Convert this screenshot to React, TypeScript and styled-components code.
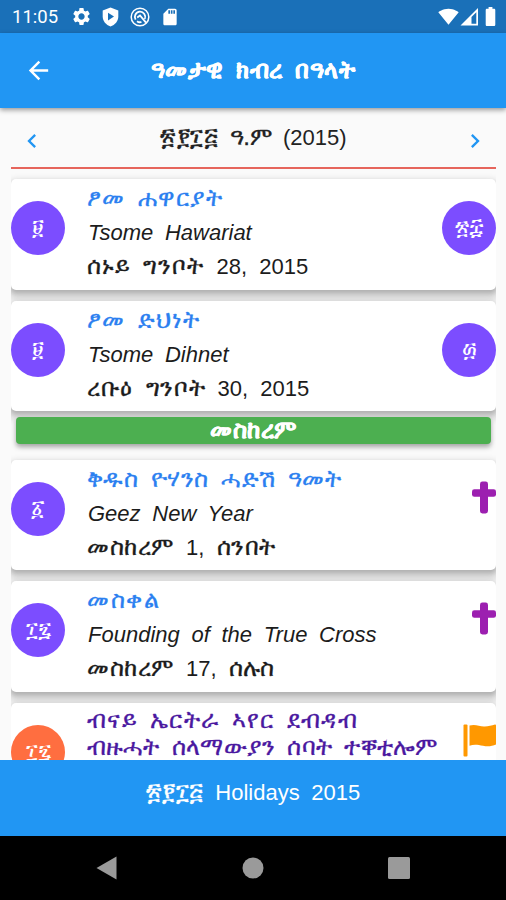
import React from "react";
import styled, { createGlobalStyle } from "styled-components";
import { MdArrowBack, MdBatteryFull, MdChevronLeft, MdChevronRight, MdSdCard, MdSettings, MdSignalWifi4Bar } from "react-icons/md";

const GlobalStyle = createGlobalStyle`
  *, *::before, *::after { box-sizing: border-box; }
  body {
    margin: 0;
    background: #fafafa;
    font-family: "Liberation Sans", "DejaVu Sans", sans-serif;
  }
`;

const Screen = styled.div`
  width: 506px;
  height: 900px;
  display: flex;
  flex-direction: column;
  overflow: hidden;
  background: #fafafa;
`;

const StatusBar = styled.div`
  flex: none;
  height: 33px;
  padding: 0 4px 0 12px;
  display: flex;
  align-items: center;
  justify-content: space-between;
  background: #1a70b8;
  color: #fff;
`;

const StatusGroup = styled.div<{ $gap: number }>`
  display: flex;
  align-items: center;
  gap: ${(p) => p.$gap}px;
  svg {
    display: block;
  }
`;

const Clock = styled.span`
  width: 48px;
  font: 400 18.5px/20px Roboto, sans-serif;
  white-space: nowrap;
`;

const AppBar = styled.header`
  flex: none;
  position: relative;
  height: 75px;
  padding: 0 24px;
  display: grid;
  grid-template-columns: 29px 1fr 29px;
  align-items: center;
  background: #2196f3;
  box-shadow: 0 2px 5px rgba(0, 0, 0, 0.4);
  color: #fff;
  svg {
    display: block;
  }
`;

/* Ge'ez text is set larger and wider than the Latin text beside it. */
const Geez = styled.span<{ $track: number }>`
  font-size: 24px;
  letter-spacing: ${(p) => p.$track}px;
  word-spacing: ${(p) => 5.8 - p.$track}px;
  -webkit-text-stroke: 0.3px currentColor;
`;

const Heading = styled.h1`
  margin: 0;
  text-align: center;
  font-size: 22px;
  line-height: 28px;
  font-weight: 700;
`;

const YearRow = styled.nav`
  flex: none;
  height: 61px;
  margin: 0 10px 0 11px;
  padding: 0 7px;
  display: grid;
  grid-template-columns: 28px 1fr 28px;
  align-items: center;
  border-bottom: 2px solid #e6655c;
  color: #2196f3;
  svg {
    display: block;
    margin-top: 6px;
  }
`;

const YearLabel = styled.div`
  text-align: center;
  font-size: 22px;
  line-height: 28px;
  word-spacing: 5.5px;
  color: #222;
`;

const Feed = styled.main`
  flex: 1;
  min-height: 0;
  margin: 0 10px 0 11px;
  padding-top: 10px;
  overflow: hidden;
`;

const Card = styled.article`
  height: 110.5px;
  margin-bottom: 11px;
  display: grid;
  grid-template-columns: 54px 1fr auto;
  column-gap: 22px;
  border-radius: 5px;
  background: #fff;
  box-shadow: 0 3px 4px rgba(0, 0, 0, 0.16), 0 5px 7px 4px rgba(0, 0, 0, 0.16);
`;

const CardText = styled.div`
  min-width: 0;
  padding-top: 3px;
  white-space: nowrap;
`;

const Title = styled.div`
  height: 34px;
  font-size: 22px;
  line-height: 31px;
  color: #2b7ff0;
`;

const NoticeTitle = styled.div`
  padding-top: 1px;
  font-size: 22px;
  line-height: 26px;
  color: #4a18a0;
`;

const English = styled.div`
  padding-left: 1px;
  font-size: 22px;
  line-height: 34px;
  font-style: italic;
  word-spacing: 5.6px;
  color: #1c1c1c;
`;

const DateLine = styled.div`
  height: 34px;
  font-size: 22px;
  line-height: 31px;
  word-spacing: 6px;
  color: #1c1c1c;
`;

const Badge = styled.div<{ $color: string }>`
  width: 54px;
  height: 54px;
  margin-top: 22px;
  border-radius: 50%;
  display: flex;
  align-items: center;
  justify-content: center;
  background: ${(p) => p.$color};
  color: #fff;
  font-size: 22px;
`;

const Marker = styled.div`
  margin-top: 21px;
  svg {
    display: block;
  }
`;

const MonthBanner = styled.div`
  height: 27px;
  margin: -5px 5px 15.5px;
  border-radius: 4px;
  background: #4caf50;
  box-shadow: 0 3px 5px rgba(0, 0, 0, 0.35);
  color: #fff;
  font-size: 22px;
  font-weight: 700;
  line-height: 26px;
  text-align: center;
`;

const Footer = styled.footer`
  flex: none;
  height: 76px;
  padding-top: 18px;
  background: #2196f3;
  color: #fff;
  font-size: 22px;
  line-height: 28px;
  word-spacing: 5.5px;
  text-align: center;
`;

const SystemNav = styled.div`
  flex: none;
  height: 64px;
  padding: 0 96px;
  display: flex;
  align-items: center;
  justify-content: space-between;
  background: #000;
`;

const PURPLE = "#7c4dff";
const ORANGE = "#ff6e40";

const ShieldIcon = () => (
  <svg width="17" height="20" viewBox="0 0 17 20">
    <path fill="#fff" d="M8.5 0.5 16.3 3.5V9.5C16.3 14 13 18 8.5 19.5 4 18 0.7 14 0.7 9.5V3.5Z" />
    <path fill="#1a70b8" d="M6 5.8 12 9.6 6 13.4Z" />
  </svg>
);

const SyncIcon = () => (
  <svg width="20" height="20" viewBox="0 0 20 20" fill="none" stroke="#fff">
    <circle cx="10" cy="10" r="8.8" strokeWidth="1.5" />
    <path strokeWidth="1.8" d="M5.6 12.6A5.2 5.2 0 1 1 14.8 12M7 14.2A5.2 5.2 0 0 0 11.5 15M7.2 10.4 10 8.4 16 15.6" />
  </svg>
);

const SignalIcon = () => (
  <svg width="19" height="18" viewBox="0 0 19 18">
    <path fill="#fff" d="M18 0V17.5H0.5Z" />
    <path fill="#1a70b8" d="M16.3 4.2V15.8H11.5V9Z" />
  </svg>
);

const CrossIcon = () => (
  <svg width="24" height="33" viewBox="0 0 24 33">
    <rect x="8" y="0.5" width="8" height="32" rx="2.4" fill="#9c1fb0" />
    <rect x="0" y="8.2" width="24" height="7.6" rx="2.4" fill="#9c1fb0" />
  </svg>
);

const FlagIcon = () => (
  <svg width="33" height="33" viewBox="0 0 33 33" fill="#ff9800">
    <rect x="0.5" y="0.5" width="4" height="32" rx="1" />
    <path d="M6.5 1.6C12-0.2 16 2.3 21 2.4 25 2.5 28.5 1.8 32 0.6Q33 0.5 33 1.6V20.5C29 22.3 25 22.8 20 21.8 15 20.8 11 20 6.5 21.8Z" />
  </svg>
);

type Holiday = {
  badge: string;
  title: React.ReactNode;
  english: string;
  date: React.ReactNode;
  days?: string;
};

const before: Holiday[] = [
  {
    badge: "፱",
    title: <Geez $track={1.1}>ፆመ ሐዋርያት</Geez>,
    english: "Tsome Hawariat",
    date: <><Geez $track={1}>ሰኑይ ግንቦት</Geez> 28, 2015</>,
    days: "፳፰",
  },
  {
    badge: "፱",
    title: <Geez $track={1.1}>ፆመ ድህነት</Geez>,
    english: "Tsome Dihnet",
    date: <><Geez $track={0.7}>ረቡዕ ግንቦት</Geez> 30, 2015</>,
    days: "፴",
  },
];

const meskerem: Holiday[] = [
  {
    badge: "፩",
    title: <Geez $track={0.45}>ቅዱስ ዮሃንስ ሓድሽ ዓመት</Geez>,
    english: "Geez New Year",
    date: <><Geez $track={0.6}>መስከረም</Geez> 1, <Geez $track={0.6}>ሰንበት</Geez></>,
  },
  {
    badge: "፲፯",
    title: <Geez $track={1.7}>መስቀል</Geez>,
    english: "Founding of the True Cross",
    date: <><Geez $track={0.6}>መስከረም</Geez> 17, <Geez $track={0}>ሰሉስ</Geez></>,
  },
];

const HolidayCard = ({ item }: { item: Holiday }) => (
  <Card>
    <Badge $color={PURPLE}>{item.badge}</Badge>
    <CardText>
      <Title>{item.title}</Title>
      <English>{item.english}</English>
      <DateLine>{item.date}</DateLine>
    </CardText>
    {item.days ? <Badge $color={PURPLE}>{item.days}</Badge> : <Marker><CrossIcon /></Marker>}
  </Card>
);

export default function App() {
  return (
    <Screen>
      <GlobalStyle />
      <StatusBar>
        <StatusGroup $gap={10.5}>
          <Clock>11:05</Clock>
          <MdSettings size={21} />
          <ShieldIcon />
          <SyncIcon />
          <MdSdCard size={20} />
        </StatusGroup>
        <StatusGroup $gap={0.5}>
          <MdSignalWifi4Bar size={21} />
          <SignalIcon />
          <MdBatteryFull size={23} />
        </StatusGroup>
      </StatusBar>
      <AppBar>
        <MdArrowBack size={29} />
        <Heading><Geez $track={0.5}>ዓመታዊ ክብረ በዓላት</Geez></Heading>
      </AppBar>
      <YearRow>
        <MdChevronLeft size={28} />
        <YearLabel><Geez $track={0.4}>፳፻፲፭</Geez> <Geez $track={-0.3}>ዓ.ም</Geez> (2015)</YearLabel>
        <MdChevronRight size={28} />
      </YearRow>
      <Feed>
        {before.map((h) => <HolidayCard key={h.english} item={h} />)}
        <MonthBanner><Geez $track={0.5}>መስከረም</Geez></MonthBanner>
        {meskerem.map((h) => <HolidayCard key={h.english} item={h} />)}
        <Card>
          <Badge $color={ORANGE}>፲፯</Badge>
          <CardText>
            <NoticeTitle>
              <Geez $track={1.25}>ብናይ ኤርትራ ኣየር ደብዳብ</Geez>
              <br />
              <Geez $track={0.15}>ብዙሓት ሰላማውያን ሰባት ተቐቲሎም</Geez>
            </NoticeTitle>
          </CardText>
          <Marker><FlagIcon /></Marker>
        </Card>
      </Feed>
      <Footer><Geez $track={0.5}>፳፻፲፭</Geez> Holidays 2015</Footer>
      <SystemNav>
        <svg width="21" height="24" viewBox="0 0 21 24"><path fill="#9a9a9a" d="M20.5 0.5V23.5L0.5 12Z" /></svg>
        <svg width="22" height="22" viewBox="0 0 22 22"><circle cx="11" cy="11" r="10.5" fill="#9a9a9a" /></svg>
        <svg width="22" height="22" viewBox="0 0 22 22"><rect width="22" height="22" rx="1.5" fill="#9a9a9a" /></svg>
      </SystemNav>
    </Screen>
  );
}
